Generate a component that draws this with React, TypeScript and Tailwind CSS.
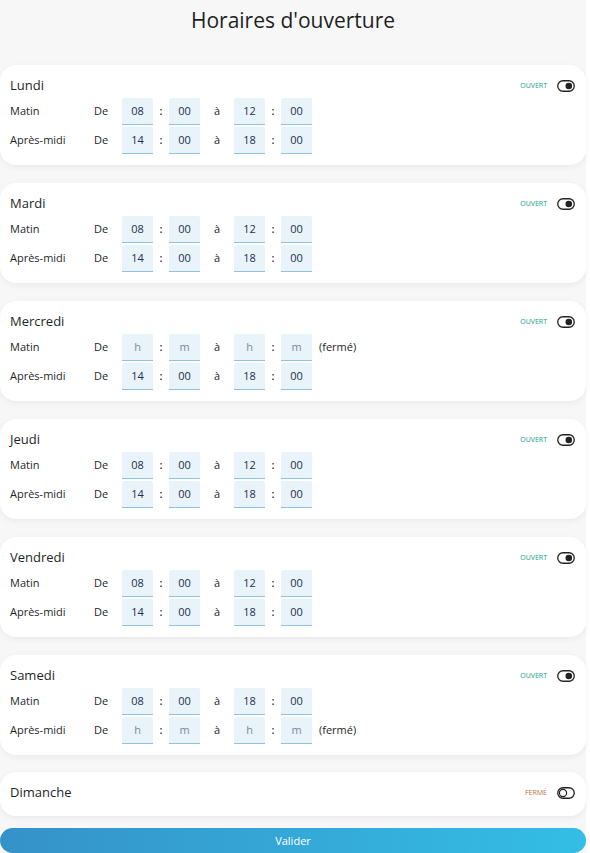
type Slot = { from: [string, string]; to: [string, string] } | null

type Day = {
  name: string
  open: boolean
  matin?: Slot
  aprem?: Slot
}

const days: Day[] = [
  { name: 'Lundi', open: true, matin: { from: ['08', '00'], to: ['12', '00'] }, aprem: { from: ['14', '00'], to: ['18', '00'] } },
  { name: 'Mardi', open: true, matin: { from: ['08', '00'], to: ['12', '00'] }, aprem: { from: ['14', '00'], to: ['18', '00'] } },
  { name: 'Mercredi', open: true, matin: null, aprem: { from: ['14', '00'], to: ['18', '00'] } },
  { name: 'Jeudi', open: true, matin: { from: ['08', '00'], to: ['12', '00'] }, aprem: { from: ['14', '00'], to: ['18', '00'] } },
  { name: 'Vendredi', open: true, matin: { from: ['08', '00'], to: ['12', '00'] }, aprem: { from: ['14', '00'], to: ['18', '00'] } },
  { name: 'Samedi', open: true, matin: { from: ['08', '00'], to: ['18', '00'] }, aprem: null },
  { name: 'Dimanche', open: false },
]

const Toggle = ({ on }: { on: boolean }) => (
  <svg width="18" height="12" viewBox="0 0 18 12" fill="none">
    <rect x="0.75" y="0.75" width="16.5" height="10.5" rx="5.25" stroke="#222" strokeWidth="1.3" />
    {on ? (
      <circle cx="11.8" cy="6" r="3.3" fill="#222" />
    ) : (
      <circle cx="6" cy="6" r="3.6" stroke="#222" strokeWidth="1.2" />
    )}
  </svg>
)

const Field = ({ value, ph }: { value?: string; ph: string }) => (
  <div className="w-[31px] h-[27px] bg-[#e9f4fa] border-b border-[#8fc3df] rounded-t-[2px] flex items-center justify-center text-[11px]">
    {value ? <span className="text-[#1d2f4a]">{value}</span> : <span className="text-[#6f8aa3]">{ph}</span>}
  </div>
)

const Row = ({ label, slot }: { label: string; slot?: Slot }) => (
  <div className="flex items-center h-[27px] text-[11px] text-[#1f1f1f]">
    <span className="w-[84px]">{label}</span>
    <span className="w-[28px]">De</span>
    <Field value={slot?.from[0]} ph="h" />
    <span className="w-[16px] text-center font-semibold">:</span>
    <Field value={slot?.from[1]} ph="m" />
    <span className="w-[34px] text-center">à</span>
    <Field value={slot?.to[0]} ph="h" />
    <span className="w-[16px] text-center font-semibold">:</span>
    <Field value={slot?.to[1]} ph="m" />
    {!slot && <span className="ml-[7px]">(fermé)</span>}
  </div>
)

export default function App() {
  return (
    <div className="w-[586px] min-h-[853px] bg-[#f7f7f7] font-['Open_Sans',sans-serif] text-[#222]">
      <h1 className="h-[65px] pt-[5px] text-center text-[21px] leading-[30px] text-[#1f1f1f]">Horaires d'ouverture</h1>
      <div className="flex flex-col gap-[18px]">
        {days.map((d) => (
          <div
            key={d.name}
            className={
              d.open
                ? 'bg-white rounded-[16px] shadow-[0_2px_6px_rgba(0,0,0,0.06)] pt-[10px] pb-[11px] pl-[10px] pr-[11px]'
                : 'bg-white rounded-[16px] shadow-[0_2px_6px_rgba(0,0,0,0.06)] pt-[10px] pb-[12px] pl-[10px] pr-[11px] -mt-[1px]'
            }
          >
            <div className="flex items-center justify-between h-[22px]">
              <span className="text-[13px] text-[#1f1f1f]">{d.name}</span>
              <div className="flex items-center gap-[10px]">
                <span className={d.open ? 'text-[7px] text-[#13a08f]' : 'text-[7px] text-[#b7743d]'}>
                  {d.open ? 'OUVERT' : 'FERMÉ'}
                </span>
                <Toggle on={d.open} />
              </div>
            </div>
            {d.open && (
              <div className="flex flex-col gap-[2px] mt-[1px]">
                <Row label="Matin" slot={d.matin} />
                <Row label="Après-midi" slot={d.aprem} />
              </div>
            )}
          </div>
        ))}
      </div>
      <button className="mt-[12px] w-full h-[25px] rounded-full bg-gradient-to-r from-[#3592c9] to-[#33bee6] text-white text-[11px] leading-[25px]">
        Valider
      </button>
    </div>
  )
}
